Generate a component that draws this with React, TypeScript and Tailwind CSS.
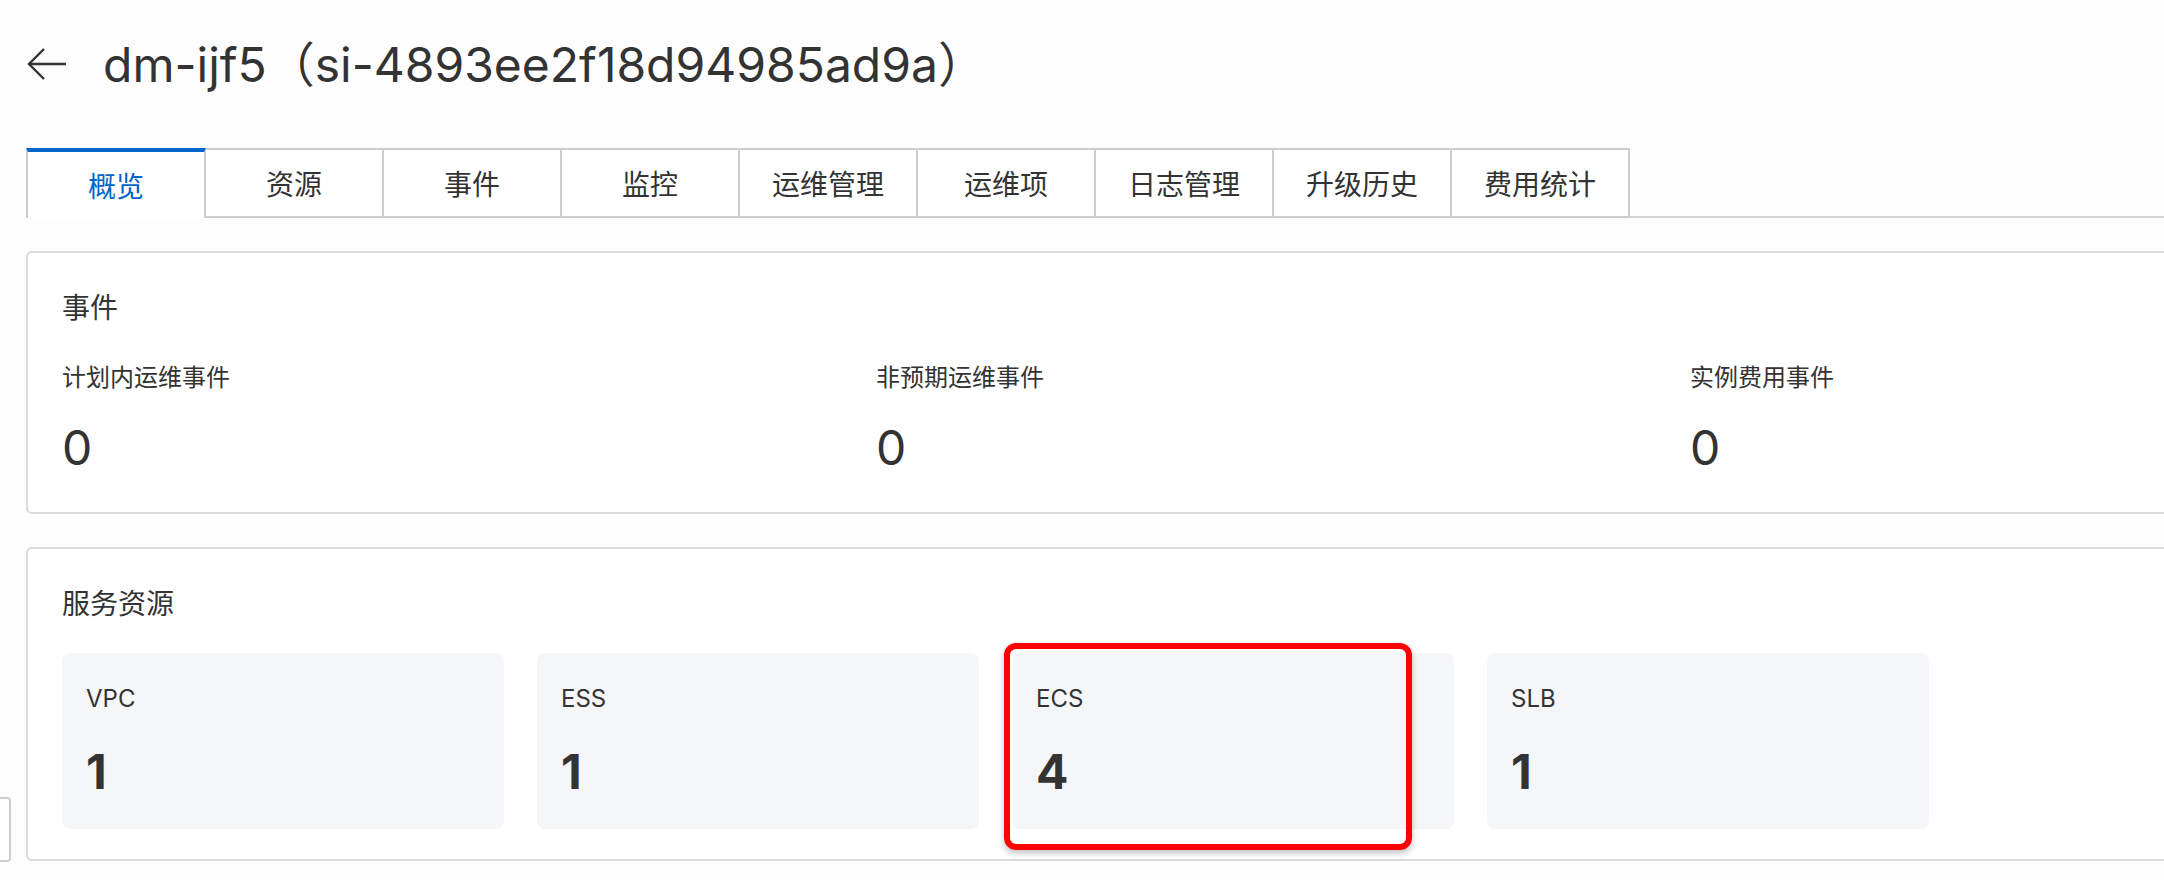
import React from 'react';

const tabs = ['概览', '资源', '事件', '监控', '运维管理', '运维项', '日志管理', '升级历史', '费用统计'];

const eventStats = [
  { label: '计划内运维事件', value: 0 },
  { label: '非预期运维事件', value: 0 },
  { label: '实例费用事件', value: 0 },
];

const resources = [
  { name: 'VPC', count: 1 },
  { name: 'ESS', count: 1 },
  { name: 'ECS', count: 4 },
  { name: 'SLB', count: 1 },
];

const BackArrow = () => (
  <svg width="40" height="32" viewBox="0 0 40 32" fill="none" className="shrink-0">
    <path d="M39 16H2" stroke="#333" strokeWidth="2.4" />
    <path d="M17 1 2 16l15 15" stroke="#333" strokeWidth="2.4" />
  </svg>
);

export default function App() {
  return (
    <div className="relative w-[2164px] h-[880px] overflow-hidden bg-[#fdfdfd] text-[#333] font-[Inter,'Noto_Sans_CJK_SC',sans-serif]">
      <div className="pl-[26px]">
        {/* header */}
        <div className="pt-[41px] flex items-center">
          <span className="ml-[1px] -mt-[3px]"><BackArrow /></span>
          <h1 className="ml-[36px] text-[48px] leading-[48px] font-normal whitespace-nowrap">
            dm-ijf5（si-4893ee2f18d94985ad9a）
          </h1>
        </div>

        {/* tabs */}
        <div className="mt-[59px] flex h-[70px] -mr-[26px]">
          {tabs.map((t, i) =>
            i === 0 ? (
              <div
                key={t}
                className="w-[180px] h-[70px] flex items-center justify-center pt-[3px] border-t-4 border-t-[#0064c8] border-x-2 border-x-[#cdcdcd] bg-white text-[28px] leading-[40px] text-[#0064c8]"
              >
                {t}
              </div>
            ) : (
              <div
                key={t}
                className="w-[178px] h-[70px] flex items-center justify-center pt-[4px] border-y-2 border-r-2 border-[#cdcdcd] bg-white text-[28px] leading-[40px]"
              >
                {t}
              </div>
            )
          )}
          <div className="flex-1 border-b-2 border-[#d4d4d4]" />
        </div>

        {/* 事件 */}
        <div className="mt-[33px] w-[2514px] border-2 border-[#d9dbde] rounded-[6px] bg-white px-[34px] pt-[35px] pb-[40px]">
          <div className="text-[28px] leading-[40px]">事件</div>
          <div className="grid grid-cols-3">
            {eventStats.map(s => (
              <div key={s.label}>
                <div className="mt-[32px] text-[24px] leading-[36px]">{s.label}</div>
                <div className="mt-[28px] text-[48px] leading-[48px]">{s.value}</div>
              </div>
            ))}
          </div>
        </div>

        {/* 服务资源 */}
        <div className="mt-[33px] w-[2514px] border-2 border-[#d9dbde] rounded-[6px] bg-white px-[34px] pt-[35px] pb-[30px]">
          <div className="text-[28px] leading-[40px]">服务资源</div>
          <div className="mt-[29px] flex gap-[33px]">
            {resources.map(r => (
              <div key={r.name} className="w-[442px] h-[176px] rounded-[8px] bg-[#f5f6f8] px-[24px] pt-[28px]">
                <div className="text-[24px] leading-[36px]">{r.name}</div>
                <div className="mt-[31px] text-[48px] leading-[48px] font-bold">{r.count}</div>
              </div>
            ))}
          </div>
        </div>
      </div>

      {/* annotation around ECS */}
      <div className="absolute left-[1004px] top-[643px] w-[408px] h-[207px] border-[6px] border-[#ff0000] rounded-[12px] shadow-[0_3px_6px_rgba(0,0,0,0.25)]" />

      {/* side handle */}
      <div className="absolute left-[-20px] top-[797px] w-[31px] h-[65px] border-2 border-[#c9ccd0] rounded-[4px] bg-white" />
    </div>
  );
}
